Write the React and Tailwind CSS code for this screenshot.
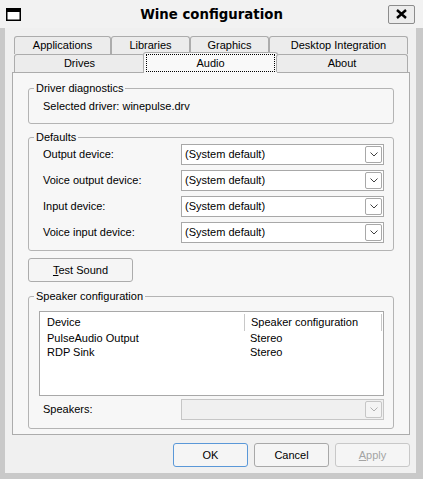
import React from 'react';

const TOP_TABS = [
  { label: 'Applications', w: 'w-[97px]' },
  { label: 'Libraries', w: 'w-[79px]' },
  { label: 'Graphics', w: 'w-[79px]' },
  { label: 'Desktop Integration', w: 'w-[139px]' },
];

const DEFAULTS = ['Output device:', 'Voice output device:', 'Input device:', 'Voice input device:'];

const DEVICES = [
  { name: 'PulseAudio Output', config: 'Stereo' },
  { name: 'RDP Sink', config: 'Stereo' },
];

const Chevron = ({ color = '#404040' }) => (
  <svg width="8" height="5" viewBox="0 0 8 5">
    <path d="M0.5 0.5 L4 4 L7.5 0.5" fill="none" stroke={color} strokeWidth="1" />
  </svg>
);

const Combo = ({ value, disabled }) => (
  <div
    className={`flex h-[21px] w-[203px] items-center border pl-[3px] ${
      disabled ? 'border-[#c6c6c6] bg-[#f0f0f0]' : 'border-[#a8a8a8] bg-white'
    }`}
  >
    <span className="flex-1 truncate">{value}</span>
    <div
      className={`mr-[1px] flex h-[17px] w-[17px] items-center justify-center rounded-[2px] border ${
        disabled ? 'border-[#c6c6c6] bg-[#f4f4f4]' : 'border-[#a8a8a8] bg-white'
      }`}
    >
      <Chevron color={disabled ? '#b0b0b0' : '#404040'} />
    </div>
  </div>
);

const GroupBox = ({ title, className = '', children }) => (
  <fieldset className={`rounded-[3px] border border-[#b4b4b4] ${className}`}>
    <legend className="ml-[5px] px-[2px] leading-[13px]">{title}</legend>
    {children}
  </fieldset>
);

const Button = ({ children, className = '' }) => (
  <button
    type="button"
    className={`flex h-[24px] items-center justify-center rounded-[3px] border bg-[#f5f5f5] ${className}`}
  >
    {children}
  </button>
);

export default function App() {
  return (
    <div className="flex h-[479px] w-[423px] flex-col bg-[#c9c9c9] text-[11px] leading-[13px] text-black [font-family:'Liberation_Sans',Arial,sans-serif]">
      {/* title bar */}
      <div className="grid h-[28px] grid-cols-[1fr_auto_1fr] items-center bg-[#f2f2f2]">
        <div className="pl-[6px]">
          <svg width="15" height="13" viewBox="0 0 15 13" className="block">
            <rect x="0.75" y="0.75" width="13.5" height="11.5" fill="white" stroke="black" strokeWidth="1.5" />
            <rect x="0" y="0" width="15" height="4" fill="black" />
          </svg>
        </div>
        <div className="text-[13.3px] font-bold [font-family:'DejaVu_Sans',sans-serif]">Wine configuration</div>
        <div className="flex justify-end pr-[8px]">
          <div className="flex h-[19px] w-[27px] items-center justify-center rounded-[2px] border border-[#8c8c8c] bg-[#ececec]">
            <svg width="11" height="10" viewBox="0 0 11 10">
              <path d="M1 1 L10 9 M10 1 L1 9" stroke="black" strokeWidth="2.4" />
            </svg>
          </div>
        </div>
      </div>

      {/* client area */}
      <div className="ml-[5px] mr-[7px] mb-[6px] flex flex-1 flex-col bg-[#f0f0f0] pt-[8px]">
        <div className="ml-[9px] flex h-[18px]">
          {TOP_TABS.map((t) => (
            <div
              key={t.label}
              className={`${t.w} flex h-[18px] items-center justify-center rounded-t-[3px] border-x border-t border-[#acacac] bg-[#ececec]`}
            >
              {t.label}
            </div>
          ))}
        </div>
        <div className="relative z-10 ml-[9px] flex h-[18px]">
          <div className="flex h-[18px] w-[131px] items-center justify-center rounded-t-[3px] border-x border-t border-[#acacac] bg-[#ececec]">
            Drives
          </div>
          <div className="-mx-[2px] -mt-[2px] h-[21px] w-[135px] rounded-t-[3px] border-x border-t border-[#acacac] bg-[#f9f9f9]">
            <div className="mx-[2px] mt-[1px] flex h-[18px] items-center justify-center border border-dotted border-black">
              Audio
            </div>
          </div>
          <div className="flex h-[18px] w-[132px] items-center justify-center rounded-t-[3px] border-x border-t border-[#acacac] bg-[#ececec]">
            About
          </div>
        </div>

        {/* tab panel */}
        <div className="ml-[7px] flex h-[363px] w-[398px] flex-col border border-[#acacac] bg-[#f7f7f7] px-[15px] pt-[9px]">
          <GroupBox title="Driver diagnostics" className="pb-[10px]">
            <div className="pl-[14px] pt-[5px]">Selected driver: winepulse.drv</div>
          </GroupBox>

          <GroupBox title="Defaults" className="mt-[7px] pb-[7px]">
            <div className="flex flex-col gap-[5px]">
              {DEFAULTS.map((label) => (
                <div key={label} className="flex items-center pl-[14px]">
                  <span className="w-[138px]">{label}</span>
                  <Combo value="(System default)" />
                </div>
              ))}
            </div>
          </GroupBox>

          <Button className="mt-[7px] w-[105px] border-[#acacac]">
            <span>
              <span className="underline">T</span>est Sound
            </span>
          </Button>

          <GroupBox title="Speaker configuration" className="mt-[8px] pb-[8px]">
            <div className="ml-[10px] mr-[9px] mt-[8px] h-[85px] border border-[#a8a8a8] bg-white">
              <div className="flex h-[19px] items-center pt-[1px]">
                <div className="flex h-[17px] w-[205px] items-center border-r border-[#c8c8c8] pl-[7px]">Device</div>
                <div className="flex h-[17px] w-[137px] items-center border-r border-[#c8c8c8] pl-[6px]">Speaker configuration</div>
              </div>
              {DEVICES.map((d) => (
                <div key={d.name} className="flex h-[14px] items-center">
                  <span className="w-[205px] pl-[7px]">{d.name}</span>
                  <span className="pl-[5px]">{d.config}</span>
                </div>
              ))}
            </div>
            <div className="mt-[3px] flex items-center pl-[14px]">
              <span className="w-[138px]">Speakers:</span>
              <Combo value="" disabled />
            </div>
          </GroupBox>
        </div>

        {/* dialog buttons */}
        <div className="mt-[8px] flex justify-end gap-[6px] pr-[6px]">
          <Button className="w-[75px] border-[#5a98d8]">OK</Button>
          <Button className="w-[75px] border-[#a8a8a8]">Cancel</Button>
          <Button className="w-[75px] border-[#c8c8c8] text-[#a4a4a4]">
            <span>
              <span className="underline">A</span>pply
            </span>
          </Button>
        </div>
      </div>
    </div>
  );
}
